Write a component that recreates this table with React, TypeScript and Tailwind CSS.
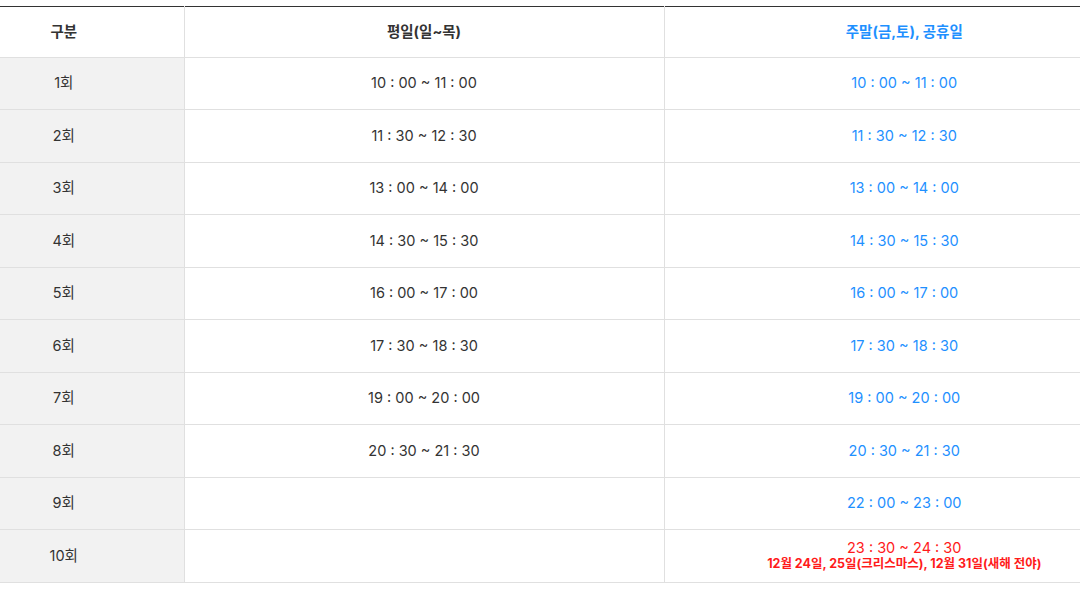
const rows: { n: string; weekday: string; weekend: string; note?: string }[] = [
  { n: "1회", weekday: "10 : 00 ~ 11 : 00", weekend: "10 : 00 ~ 11 : 00" },
  { n: "2회", weekday: "11 : 30 ~ 12 : 30", weekend: "11 : 30 ~ 12 : 30" },
  { n: "3회", weekday: "13 : 00 ~ 14 : 00", weekend: "13 : 00 ~ 14 : 00" },
  { n: "4회", weekday: "14 : 30 ~ 15 : 30", weekend: "14 : 30 ~ 15 : 30" },
  { n: "5회", weekday: "16 : 00 ~ 17 : 00", weekend: "16 : 00 ~ 17 : 00" },
  { n: "6회", weekday: "17 : 30 ~ 18 : 30", weekend: "17 : 30 ~ 18 : 30" },
  { n: "7회", weekday: "19 : 00 ~ 20 : 00", weekend: "19 : 00 ~ 20 : 00" },
  { n: "8회", weekday: "20 : 30 ~ 21 : 30", weekend: "20 : 30 ~ 21 : 30" },
  { n: "9회", weekday: "", weekend: "22 : 00 ~ 23 : 00" },
  {
    n: "10회",
    weekday: "",
    weekend: "23 : 30 ~ 24 : 30",
    note: "12월 24일, 25일(크리스마스), 12월 31일(새해 전야)",
  },
];

export default function App() {
  return (
    <div
      className="w-[1080px] overflow-hidden bg-white pt-[6px]"
      style={{ fontFamily: 'Inter, "Noto Sans CJK KR", sans-serif' }}
    >
      <table className="-ml-[56px] w-[1200px] table-fixed border-collapse border-t border-t-[#333] text-center text-[14.5px] text-[#333]">
        <colgroup>
          <col className="w-[240px]" />
          <col className="w-[480px]" />
          <col className="w-[480px]" />
        </colgroup>
        <thead>
          <tr className="h-[50.5px] border-b border-[#e0e0e0]">
            <th className="border-r border-[#e0e0e0] font-bold">구분</th>
            <th className="border-r border-[#e0e0e0] font-bold">평일(일~목)</th>
            <th className="font-bold text-[#1e90ff]">주말(금,토), 공휴일</th>
          </tr>
        </thead>
        <tbody>
          {rows.map((r) => (
            <tr key={r.n} className="h-[52.5px] border-b border-[#e0e0e0]">
              <td className="border-r border-[#e0e0e0] bg-[#f2f2f2]">{r.n}</td>
              <td className="border-r border-[#e0e0e0]">{r.weekday}</td>
              {r.note ? (
                <td className="text-[#ff1a1a]">
                  <div className="leading-[16px]">{r.weekend}</div>
                  <div className="text-[12.5px] font-bold leading-[15px]">{r.note}</div>
                </td>
              ) : (
                <td className="text-[#1e90ff]">{r.weekend}</td>
              )}
            </tr>
          ))}
        </tbody>
      </table>
    </div>
  );
}
